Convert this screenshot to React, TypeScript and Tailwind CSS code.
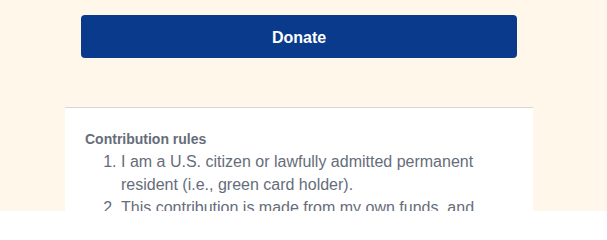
export default function App() {
  return (
    <div className="h-[211px] w-full overflow-hidden bg-[#fef7ea] font-['Liberation_Sans',Arial,sans-serif]">
      <div className="ml-[65px] w-[468px] pt-[15px]">
        <div className="px-4">
          <button
            type="button"
            className="flex h-[43px] w-full items-center justify-center rounded-[4px] bg-[#0a3a8c] pt-[2px] text-[16px] font-bold text-white"
          >
            Donate
          </button>
        </div>

        <div className="mt-[49px] border-t border-[#d4d6da] bg-white px-5 pt-[21px] pb-6">
          <h3 className="text-[14px] leading-5 font-bold text-[#666d7a]">Contribution rules</h3>
          <ol className="mt-[1px] list-decimal pl-[36px] text-[16px] leading-[23px] text-[#666d7a]">
            <li>I am a U.S. citizen or lawfully admitted permanent resident (i.e., green card holder).</li>
            <li>This contribution is made from my own funds, and funds are not being provided to me by another person or entity for the purpose of making this contribution.</li>
          </ol>
        </div>
      </div>
    </div>
  );
}
